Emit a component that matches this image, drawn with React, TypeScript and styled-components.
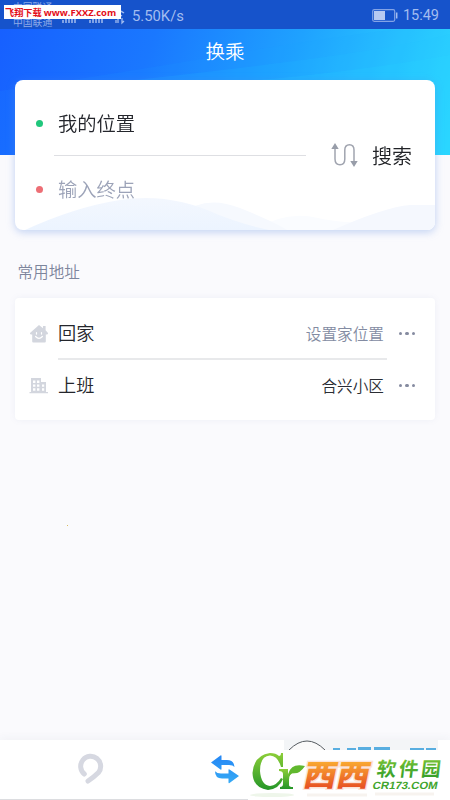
import React from "react";
import styled, { createGlobalStyle } from "styled-components";

const Global = createGlobalStyle`
  * { box-sizing: border-box; }
  body { margin: 0; font-family: "Noto Sans CJK SC", sans-serif; font-weight: 350; }
`;

const Screen = styled.div`
  position: relative;
  display: flex;
  flex-direction: column;
  width: 450px;
  height: 800px;
  overflow: hidden;
  background: #fafafd;
`;

const StatusBar = styled.div`
  position: relative;
  display: flex;
  align-items: center;
  height: 29px;
  padding: 2px 11px 0 13px;
  background: #1653cb;
  color: #a3bdf0;
  font: 400 14.5px/20px Roboto, sans-serif;
`;

const Carrier = styled.div`
  width: 40px;
  height: 27px;
  margin-top: -2px;
  font: 400 9.8px/12px "Noto Sans CJK SC", sans-serif;
  white-space: nowrap;
  color: #8fabe8;
  span { display: block; height: 13px; }
  span + span { padding-top: 2px; }
`;

const Signals = styled.svg`
  margin-left: 9px;
  width: 64px;
  height: 20px;
`;

const Speed = styled.span`
  margin-left: 6px;
  font-size: 14.8px;
`;

const Battery = styled.svg`
  margin-left: auto;
  margin-right: 5px;
`;

const Hero = styled.header`
  position: relative;
  height: 126px;
  flex: none;
  background: linear-gradient(108deg, #1760ff 0%, #1a78ff 32%, #1fa2ff 62%, #2fe0ff 100%);
`;

const HeroWaves = styled.svg`
  position: absolute;
  inset: 0;
`;

const Title = styled.h1`
  position: relative;
  margin: 0;
  padding-top: 7px;
  text-align: center;
  font-size: 19.5px;
  line-height: 30px;
  font-weight: 350;
  color: #fff;
`;

const RouteCard = styled.section`
  position: relative;
  display: flex;
  align-items: center;
  flex: none;
  height: 150px;
  margin: -75px 15px 0;
  border-radius: 8px;
  background: #fff;
  overflow: hidden;
`;

const CardShadow = styled.div`
  flex: none;
  border-radius: 8px;
  filter: drop-shadow(0 2px 4px rgba(90, 135, 225, 0.36));
`;

const CardWaves = styled.svg`
  position: absolute;
  left: 0;
  bottom: 0;
`;

const Stops = styled.div`
  position: relative;
  width: 291px;
  padding-top: 4px;
`;

const Stop = styled.div<{ $muted?: boolean }>`
  display: flex;
  align-items: center;
  height: ${(p) => (p.$muted ? 67 : 63)}px;
  padding-left: 21px;
  font-size: 19.3px;
  color: ${(p) => (p.$muted ? "#9ca3b8" : "#24262c")};
`;

const Dot = styled.i<{ $color: string }>`
  width: 7px;
  height: 7px;
  margin-right: 15px;
  border-radius: 50%;
  background: ${(p) => p.$color};
`;

const StopLine = styled.div`
  height: 1px;
  margin-left: 39px;
  background: #dedfe3;
`;

const SwapIcon = styled.svg`
  position: relative;
  margin-left: 25px;
`;

const Search = styled.button`
  position: relative;
  margin-left: 14px;
  padding: 2px 0 0;
  border: 0;
  background: none;
  font: inherit;
  font-size: 20px;
  line-height: 30px;
  color: #202226;
`;

const SectionTitle = styled.h2`
  flex: none;
  margin: 30px 0 0 17.5px;
  height: 38px;
  font-size: 15.6px;
  line-height: 23px;
  font-weight: 350;
  color: #7d859c;
`;

const Places = styled.section`
  flex: none;
  height: 122px;
  margin: 0 15px;
  padding: 10px 0;
  border-radius: 4px;
  background: #fff;
  box-shadow: 0 0 6px rgba(120, 135, 175, 0.09);
`;

const Place = styled.div`
  display: flex;
  align-items: center;
  height: 51px;
  padding: 0 20px 0 14px;
`;

const PlaceName = styled.span`
  margin-left: 9px;
  padding-bottom: 3px;
  font-size: 18.2px;
  color: #24262c;
`;

const PlaceValue = styled.span<{ $set?: boolean }>`
  margin-left: auto;
  margin-right: 15px;
  padding-bottom: 2px;
  font-size: 15.6px;
  color: ${(p) => (p.$set ? "#2b2d33" : "#838ba2")};
`;

const More = styled.span`
  display: flex;
  gap: 3px;
  i { width: 3.4px; height: 3.4px; border-radius: 50%; background: #858ba0; }
`;

const PlaceLine = styled.div`
  height: 2px;
  margin: -1px 48px 0 43px;
  background: #e8e9eb;
`;

const TabBar = styled.nav`
  display: flex;
  height: 60px;
  margin-top: auto;
  background: #fff;
  border-bottom: 1px solid #dcdde0;
  box-shadow: 0 -3px 8px rgba(60, 70, 100, 0.04);
`;

const Tab = styled.div<{ $left: number }>`
  margin-left: ${(p) => p.$left}px;
  padding-top: 13px;
`;

const SourceTag = styled.div`
  position: absolute;
  left: 4px;
  top: 5px;
  width: 117px;
  height: 14px;
  padding-left: 1px;
  background: #fff;
  color: #e30d18;
  font: 700 9.2px/15px "Noto Sans CJK SC", sans-serif;
  white-space: nowrap;
  display: flex;
  gap: 2px;
  b { font: 700 9.4px/16px "Open Sans", sans-serif; }
`;

const Speck = styled.i`
  position: absolute;
  left: 67px;
  top: 525px;
  width: 1px;
  height: 1px;
  background: #d9bd60;
`;

const SiteMark = styled.svg`
  position: absolute;
  left: 240px;
  top: 738px;
`;

const HomeIcon = () => (
  <svg width="20" height="20" viewBox="0 0 20 20">
    <path d="M10 1 L14 4.2 V2 h2.6 v4.3 L19 9 q.3 1.3-1 1.5 h-1.2 V17.5 q0 1-1 1 H4.2 q-1 0-1-1 V10.5 H2 Q.7 10.3 1 9 Z" fill="#d3d6de" />
    <path d="M7.5 8.5v1.6M12.5 8.5v1.6M6.6 12.5q3.4 3.6 6.8 0" fill="none" stroke="#fff" strokeWidth="1.2" strokeLinecap="round" />
  </svg>
);

const OfficeIcon = () => (
  <svg width="20" height="20" viewBox="0 0 20 20">
    <path d="M2 2h10v4h5v10h2v1.3H.5V16H2z" fill="#d3d6de" />
    <path d="M4 4.5h2.4v2.4H4zM8 4.5h2.4v2.4H8zM4 8.4h2.4v2.4H4zM8 8.4h2.4v2.4H8zM4 12.3h2.4v2.4H4zM8 12.3h2.4v2.4H8zM13 8.4h2.2v2.4H13zM13 12.3h2.2v2.4H13z" fill="#fff" />
  </svg>
);

const Dots = () => <More><i /><i /><i /></More>;

export default function App() {
  return (
    <Screen>
      <Global />
      <StatusBar>
        <Carrier><span>中国联通</span><span>中国联通</span></Carrier>
        <Signals viewBox="0 0 64 20">
          <path d="M1 14v3M4 13v4M7 12v5M10 11v6M13 10v7M28 14v3M31 13v4M34 12v5M37 11v6M40 10v7" stroke="#a3bdf0" strokeWidth="1.5" />
          <path d="M52 7q5-4 10 0M54 10q3-2 6 0M54 17v-3M56 17v-4M60 12v5l2-2" fill="none" stroke="#a3bdf0" strokeWidth="1.3" />
        </Signals>
        <Speed>5.50K/s</Speed>
        <Battery width="26" height="13" viewBox="0 0 26 13">
          <rect x=".7" y=".7" width="22" height="11.6" rx="1.5" fill="none" stroke="#83a3e6" strokeWidth="1.2" />
          <rect x="2" y="2" width="11" height="9" fill="#b6c9f2" />
          <path d="M24.7 3.5v6" stroke="#a3bdf0" strokeWidth="1.5" />
        </Battery>
        <span>15:49</span>
        <SourceTag>飞翔下载 <b>www.FXXZ.com</b></SourceTag>
      </StatusBar>
      <Hero>
        <HeroWaves width="450" height="126" viewBox="0 0 450 126">
          <path d="M0 62 Q120 44 225 26 T400 0 H450 V126 H0Z" fill="#20a8ff" opacity=".1" />
          <path d="M70 58 Q220 42 310 30 T450 5 V126 H70Z" fill="#25c4ff" opacity=".14" />
          <path d="M225 54 Q350 44 450 26 V126 H225Z" fill="#2cdcff" opacity=".14" />
        </HeroWaves>
        <Title>换乘</Title>
      </Hero>
      <CardShadow>
        <RouteCard>
          <CardWaves width="420" height="42" viewBox="0 0 420 42">
            <defs>
              <linearGradient id="wave" x1="0" y1="0" x2="0" y2="1">
                <stop offset="0" stopColor="#f3f7fe" />
                <stop offset="1" stopColor="#ecf4ff" />
              </linearGradient>
            </defs>
            <path d="M240 42 Q270 22 303 30 T420 34 V42Z" fill="#fafcff" />
            <path d="M165 27 Q190 6 225 20 T272 42 H150Z" fill="#f6f9fe" />
            <path d="M318 42 Q370 19 395 17 H420 V42Z" fill="#f5f8fe" />
            <path d="M10 42 Q60 19 105 12 Q155 4 204 27 Q230 37 254 42Z" fill="url(#wave)" />
          </CardWaves>
          <Stops>
            <Stop><Dot $color="#20c77c" />我的位置</Stop>
            <StopLine />
            <Stop $muted><Dot $color="#ed6e75" />输入终点</Stop>
          </Stops>
          <SwapIcon width="27" height="26" viewBox="0 0 27 26">
            <path d="M4 5 V17 Q4 22.7 9 22.7 Q13.8 22.7 13.8 17 V8 Q13.8 2.7 18.5 2.7 Q23 2.7 23 8 V21" fill="none" stroke="#a0a4af" strokeWidth="1.5" />
            <path d="M4 1 L7.7 7 H.3Z M23 25 L26.7 19 H19.3Z" fill="#989da9" />
          </SwapIcon>
          <Search>搜索</Search>
        </RouteCard>
      </CardShadow>
      <SectionTitle>常用地址</SectionTitle>
      <Places>
        <Place><HomeIcon /><PlaceName>回家</PlaceName><PlaceValue>设置家位置</PlaceValue><Dots /></Place>
        <PlaceLine />
        <Place><OfficeIcon /><PlaceName>上班</PlaceName><PlaceValue $set>合兴小区</PlaceValue><Dots /></Place>
      </Places>
      <TabBar>
        <Tab $left={76}>
          <svg width="28" height="32" viewBox="0 0 28 32">
            <path d="M8.3 21 A10 10 0 1 1 22.5 19.5 Q18 24 12 28" fill="none" stroke="#d6d8e1" strokeWidth="5" strokeLinecap="round" />
            <path d="M9 26l5-6" stroke="#fff" strokeWidth="1" />
          </svg>
        </Tab>
        <Tab $left={106}>
          <svg width="30" height="32" viewBox="0 0 30 32">
            <defs>
              <linearGradient id="swap" x1="0" y1="0" x2="0" y2="1">
                <stop offset="0" stopColor="#2587f5" />
                <stop offset="1" stopColor="#36aaf5" />
              </linearGradient>
            </defs>
            <path d="M1 9.5 L10.5 2.5 q1-.5 1 .7 V7 H17 Q24 7 24.5 14 Q23 12 19 12 H11.5 V16 q0 1.2-1 .5Z M29 23 L19.5 30 q-1 .5-1-.7 V25.5 H12 Q5 25.5 5 18.3 Q7 20.5 11 20.5 H18.5 V17 q0-1.2 1-.5Z" fill="url(#swap)" />
          </svg>
        </Tab>
      </TabBar>
      <Speck />
      <SiteMark width="210" height="62" viewBox="0 0 210 62">
        <defs>
          <linearGradient id="green" x1="0" y1="0" x2="0" y2="1">
            <stop offset="0" stopColor="#8cce38" />
            <stop offset="1" stopColor="#249628" />
          </linearGradient>
          <linearGradient id="orange" x1="0" y1="0" x2="0" y2="1">
            <stop offset=".2" stopColor="#fbb032" />
            <stop offset="1" stopColor="#e33d20" />
          </linearGradient>
        </defs>
        <path d="M44 2H198V12H44Z" fill="#f3f5f7" />
        <path d="M49 12 Q67 -6 85 12" fill="#fafafa" stroke="#555b60" strokeWidth="1" />
        <path d="M93 10h7v2h-7zM107 10h9v2h-9zM118 9h13v3h-13zM134 9h16v3h-16zM170 10h14v2h-14zM186 10h10v2h-10z" fill="#58aee0" />
        <path d="M8 12H210V62H8Z" fill="#fff" />
        <path d="M43 15V29H41Q38 18 30 17.5Q20 18 20 33Q21 47 30 48Q37 47 41 40L43 41Q39 51 28 52Q13 50 12.5 35Q14 17 30 15Q36 15 39 18Q41 18 41 15Z" fill="url(#green)" />
        <path d="M39 31h9v5q2-5 6-5v4q-5 0-5 7v5q0 2 4 2v2H40v-2q3 0 3-3V36q0-3-4-3Z" fill="url(#green)" />
        <path d="M49 35Q51 25 65 28Q59 37 52 35L49 38Z" fill="#60b82e" />
        <g fontFamily="Noto Sans CJK SC, sans-serif" fontWeight="900">
          <text transform="translate(62 47.5) skewX(-12) scale(1 .9)" fontSize="33" textLength="66" lengthAdjust="spacingAndGlyphs" fill="url(#orange)" stroke="#fbe3d9" strokeWidth="3" paintOrder="stroke">西西</text>
          <text transform="translate(136 38) skewX(-7)" fontSize="19.5" fontWeight="700" textLength="64" fill="url(#green)">软件园</text>
        </g>
        <text transform="translate(132 51) skewX(-12)" fontFamily="Liberation Sans, sans-serif" fontWeight="700" fontSize="10.5" textLength="65" lengthAdjust="spacingAndGlyphs" fill="#42a52d">CR173.COM</text>
        <ellipse cx="32" cy="57" rx="22" ry="2" fill="#eef6ea" />
        <path d="M67 57h60M135 56h59" stroke="#f7f3ef" strokeWidth="3" />
      </SiteMark>
    </Screen>
  );
}
